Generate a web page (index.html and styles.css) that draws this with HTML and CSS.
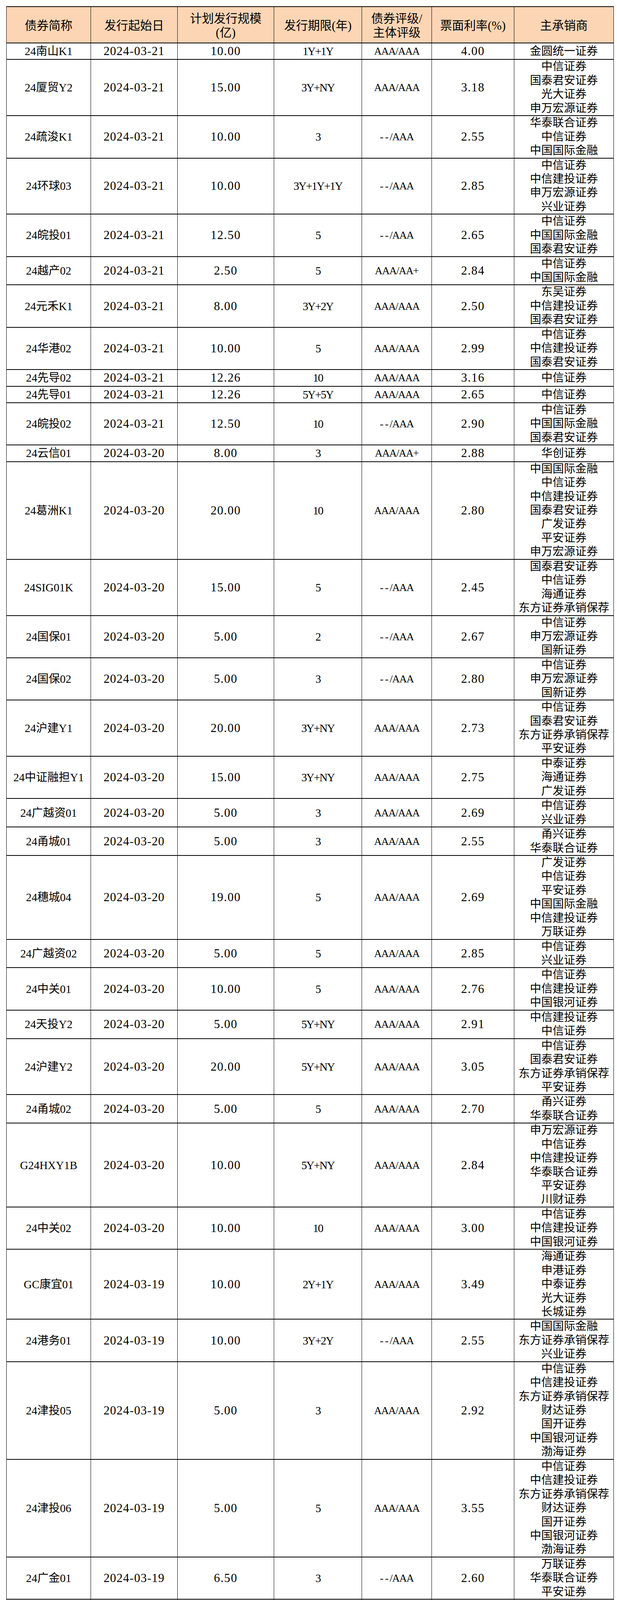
FILE: index.html
```html
<!DOCTYPE html>
<html lang="zh-CN">
<head>
<meta charset="utf-8">
<title>债券发行</title>
<link rel="stylesheet" href="styles.css">
</head>
<body>
<table class="bonds">
<colgroup>
<col class="w1"><col class="w2"><col class="w3"><col class="w4"><col class="w5"><col class="w6"><col class="w7">
</colgroup>
<thead>
<tr class="hd">
<th><div class="hc">债券简称</div></th>
<th><div class="hc">发行起始日</div></th>
<th><div class="hc"><div>计划发行规模</div><div>(亿)</div></div></th>
<th><div class="hc">发行期限(年)</div></th>
<th><div class="hc"><div>债券评级/</div><div>主体评级</div></div></th>
<th><div class="hc">票面利率(%)</div></th>
<th><div class="hc">主承销商</div></th>
</tr>
</thead>
<tbody>
<tr class="one"><td class="name">24南山K1</td><td class="date">2024-03-21</td><td class="amt">10.00</td><td class="term">1Y+1Y</td><td class="rating">AAA/AAA</td><td class="cpn">4.00</td><td class="uw"><div class="ln">金圆统一证券</div></td></tr>
<tr><td class="name">24厦贸Y2</td><td class="date">2024-03-21</td><td class="amt">15.00</td><td class="term">3Y+NY</td><td class="rating">AAA/AAA</td><td class="cpn">3.18</td><td class="uw"><div class="ln">中信证券</div><div class="ln">国泰君安证券</div><div class="ln">光大证券</div><div class="ln">申万宏源证券</div></td></tr>
<tr><td class="name">24疏浚K1</td><td class="date">2024-03-21</td><td class="amt">10.00</td><td class="term">3</td><td class="rating"><span class="dash">--</span>/AAA</td><td class="cpn">2.55</td><td class="uw"><div class="ln">华泰联合证券</div><div class="ln">中信证券</div><div class="ln">中国国际金融</div></td></tr>
<tr><td class="name">24环球03</td><td class="date">2024-03-21</td><td class="amt">10.00</td><td class="term">3Y+1Y+1Y</td><td class="rating"><span class="dash">--</span>/AAA</td><td class="cpn">2.85</td><td class="uw"><div class="ln">中信证券</div><div class="ln">中信建投证券</div><div class="ln">申万宏源证券</div><div class="ln">兴业证券</div></td></tr>
<tr><td class="name">24皖投01</td><td class="date">2024-03-21</td><td class="amt">12.50</td><td class="term">5</td><td class="rating"><span class="dash">--</span>/AAA</td><td class="cpn">2.65</td><td class="uw"><div class="ln">中信证券</div><div class="ln">中国国际金融</div><div class="ln">国泰君安证券</div></td></tr>
<tr><td class="name">24越产02</td><td class="date">2024-03-21</td><td class="amt">2.50</td><td class="term">5</td><td class="rating">AAA/AA+</td><td class="cpn">2.84</td><td class="uw"><div class="ln">中信证券</div><div class="ln">中国国际金融</div></td></tr>
<tr><td class="name">24元禾K1</td><td class="date">2024-03-21</td><td class="amt">8.00</td><td class="term">3Y+2Y</td><td class="rating">AAA/AAA</td><td class="cpn">2.50</td><td class="uw"><div class="ln">东吴证券</div><div class="ln">中信建投证券</div><div class="ln">国泰君安证券</div></td></tr>
<tr><td class="name">24华港02</td><td class="date">2024-03-21</td><td class="amt">10.00</td><td class="term">5</td><td class="rating">AAA/AAA</td><td class="cpn">2.99</td><td class="uw"><div class="ln">中信证券</div><div class="ln">中信建投证券</div><div class="ln">国泰君安证券</div></td></tr>
<tr class="one"><td class="name">24先导02</td><td class="date">2024-03-21</td><td class="amt">12.26</td><td class="term">10</td><td class="rating">AAA/AAA</td><td class="cpn">3.16</td><td class="uw"><div class="ln">中信证券</div></td></tr>
<tr class="one"><td class="name">24先导01</td><td class="date">2024-03-21</td><td class="amt">12.26</td><td class="term">5Y+5Y</td><td class="rating">AAA/AAA</td><td class="cpn">2.65</td><td class="uw"><div class="ln">中信证券</div></td></tr>
<tr><td class="name">24皖投02</td><td class="date">2024-03-21</td><td class="amt">12.50</td><td class="term">10</td><td class="rating"><span class="dash">--</span>/AAA</td><td class="cpn">2.90</td><td class="uw"><div class="ln">中信证券</div><div class="ln">中国国际金融</div><div class="ln">国泰君安证券</div></td></tr>
<tr class="one"><td class="name">24云信01</td><td class="date">2024-03-20</td><td class="amt">8.00</td><td class="term">3</td><td class="rating">AAA/AA+</td><td class="cpn">2.88</td><td class="uw"><div class="ln">华创证券</div></td></tr>
<tr><td class="name">24葛洲K1</td><td class="date">2024-03-20</td><td class="amt">20.00</td><td class="term">10</td><td class="rating">AAA/AAA</td><td class="cpn">2.80</td><td class="uw"><div class="ln">中国国际金融</div><div class="ln">中信证券</div><div class="ln">中信建投证券</div><div class="ln">国泰君安证券</div><div class="ln">广发证券</div><div class="ln">平安证券</div><div class="ln">申万宏源证券</div></td></tr>
<tr><td class="name">24SIG01K</td><td class="date">2024-03-20</td><td class="amt">15.00</td><td class="term">5</td><td class="rating"><span class="dash">--</span>/AAA</td><td class="cpn">2.45</td><td class="uw"><div class="ln">国泰君安证券</div><div class="ln">中信证券</div><div class="ln">海通证券</div><div class="ln">东方证券承销保荐</div></td></tr>
<tr><td class="name">24国保01</td><td class="date">2024-03-20</td><td class="amt">5.00</td><td class="term">2</td><td class="rating"><span class="dash">--</span>/AAA</td><td class="cpn">2.67</td><td class="uw"><div class="ln">中信证券</div><div class="ln">申万宏源证券</div><div class="ln">国新证券</div></td></tr>
<tr><td class="name">24国保02</td><td class="date">2024-03-20</td><td class="amt">5.00</td><td class="term">3</td><td class="rating"><span class="dash">--</span>/AAA</td><td class="cpn">2.80</td><td class="uw"><div class="ln">中信证券</div><div class="ln">申万宏源证券</div><div class="ln">国新证券</div></td></tr>
<tr><td class="name">24沪建Y1</td><td class="date">2024-03-20</td><td class="amt">20.00</td><td class="term">3Y+NY</td><td class="rating">AAA/AAA</td><td class="cpn">2.73</td><td class="uw"><div class="ln">中信证券</div><div class="ln">国泰君安证券</div><div class="ln">东方证券承销保荐</div><div class="ln">平安证券</div></td></tr>
<tr><td class="name">24中证融担Y1</td><td class="date">2024-03-20</td><td class="amt">15.00</td><td class="term">3Y+NY</td><td class="rating">AAA/AAA</td><td class="cpn">2.75</td><td class="uw"><div class="ln">中泰证券</div><div class="ln">海通证券</div><div class="ln">广发证券</div></td></tr>
<tr><td class="name">24广越资01</td><td class="date">2024-03-20</td><td class="amt">5.00</td><td class="term">3</td><td class="rating">AAA/AAA</td><td class="cpn">2.69</td><td class="uw"><div class="ln">中信证券</div><div class="ln">兴业证券</div></td></tr>
<tr><td class="name">24甬城01</td><td class="date">2024-03-20</td><td class="amt">5.00</td><td class="term">3</td><td class="rating">AAA/AAA</td><td class="cpn">2.55</td><td class="uw"><div class="ln">甬兴证券</div><div class="ln">华泰联合证券</div></td></tr>
<tr><td class="name">24穗城04</td><td class="date">2024-03-20</td><td class="amt">19.00</td><td class="term">5</td><td class="rating">AAA/AAA</td><td class="cpn">2.69</td><td class="uw"><div class="ln">广发证券</div><div class="ln">中信证券</div><div class="ln">平安证券</div><div class="ln">中国国际金融</div><div class="ln">中信建投证券</div><div class="ln">万联证券</div></td></tr>
<tr><td class="name">24广越资02</td><td class="date">2024-03-20</td><td class="amt">5.00</td><td class="term">5</td><td class="rating">AAA/AAA</td><td class="cpn">2.85</td><td class="uw"><div class="ln">中信证券</div><div class="ln">兴业证券</div></td></tr>
<tr><td class="name">24中关01</td><td class="date">2024-03-20</td><td class="amt">10.00</td><td class="term">5</td><td class="rating">AAA/AAA</td><td class="cpn">2.76</td><td class="uw"><div class="ln">中信证券</div><div class="ln">中信建投证券</div><div class="ln">中国银河证券</div></td></tr>
<tr><td class="name">24天投Y2</td><td class="date">2024-03-20</td><td class="amt">5.00</td><td class="term">5Y+NY</td><td class="rating">AAA/AAA</td><td class="cpn">2.91</td><td class="uw"><div class="ln">中信建投证券</div><div class="ln">中信证券</div></td></tr>
<tr><td class="name">24沪建Y2</td><td class="date">2024-03-20</td><td class="amt">20.00</td><td class="term">5Y+NY</td><td class="rating">AAA/AAA</td><td class="cpn">3.05</td><td class="uw"><div class="ln">中信证券</div><div class="ln">国泰君安证券</div><div class="ln">东方证券承销保荐</div><div class="ln">平安证券</div></td></tr>
<tr><td class="name">24甬城02</td><td class="date">2024-03-20</td><td class="amt">5.00</td><td class="term">5</td><td class="rating">AAA/AAA</td><td class="cpn">2.70</td><td class="uw"><div class="ln">甬兴证券</div><div class="ln">华泰联合证券</div></td></tr>
<tr><td class="name">G24HXY1B</td><td class="date">2024-03-20</td><td class="amt">10.00</td><td class="term">5Y+NY</td><td class="rating">AAA/AAA</td><td class="cpn">2.84</td><td class="uw"><div class="ln">申万宏源证券</div><div class="ln">中信证券</div><div class="ln">中信建投证券</div><div class="ln">华泰联合证券</div><div class="ln">平安证券</div><div class="ln">川财证券</div></td></tr>
<tr><td class="name">24中关02</td><td class="date">2024-03-20</td><td class="amt">10.00</td><td class="term">10</td><td class="rating">AAA/AAA</td><td class="cpn">3.00</td><td class="uw"><div class="ln">中信证券</div><div class="ln">中信建投证券</div><div class="ln">中国银河证券</div></td></tr>
<tr><td class="name">GC康宜01</td><td class="date">2024-03-19</td><td class="amt">10.00</td><td class="term">2Y+1Y</td><td class="rating">AAA/AAA</td><td class="cpn">3.49</td><td class="uw"><div class="ln">海通证券</div><div class="ln">申港证券</div><div class="ln">中泰证券</div><div class="ln">光大证券</div><div class="ln">长城证券</div></td></tr>
<tr><td class="name">24港务01</td><td class="date">2024-03-19</td><td class="amt">10.00</td><td class="term">3Y+2Y</td><td class="rating"><span class="dash">--</span>/AAA</td><td class="cpn">2.55</td><td class="uw"><div class="ln">中国国际金融</div><div class="ln">东方证券承销保荐</div><div class="ln">兴业证券</div></td></tr>
<tr><td class="name">24津投05</td><td class="date">2024-03-19</td><td class="amt">5.00</td><td class="term">3</td><td class="rating">AAA/AAA</td><td class="cpn">2.92</td><td class="uw"><div class="ln">中信证券</div><div class="ln">中信建投证券</div><div class="ln">东方证券承销保荐</div><div class="ln">财达证券</div><div class="ln">国开证券</div><div class="ln">中国银河证券</div><div class="ln">渤海证券</div></td></tr>
<tr><td class="name">24津投06</td><td class="date">2024-03-19</td><td class="amt">5.00</td><td class="term">5</td><td class="rating">AAA/AAA</td><td class="cpn">3.55</td><td class="uw"><div class="ln">中信证券</div><div class="ln">中信建投证券</div><div class="ln">东方证券承销保荐</div><div class="ln">财达证券</div><div class="ln">国开证券</div><div class="ln">中国银河证券</div><div class="ln">渤海证券</div></td></tr>
<tr><td class="name">24广金01</td><td class="date">2024-03-19</td><td class="amt">6.50</td><td class="term">3</td><td class="rating"><span class="dash">--</span>/AAA</td><td class="cpn">2.60</td><td class="uw"><div class="ln">万联证券</div><div class="ln">华泰联合证券</div><div class="ln">平安证券</div></td></tr>
<tr><td class="name">24龙川G1</td><td class="date">2024-03-19</td><td class="amt">7.00</td><td class="term">3Y+2Y</td><td class="rating"><span class="dash">--</span>/AA+</td><td class="cpn">2.83</td><td class="uw"><div class="ln">东吴证券</div><div class="ln">中国国际金融</div></td></tr>
<tr><td class="name">24广金02</td><td class="date">2024-03-19</td><td class="amt">6.50</td><td class="term">5</td><td class="rating"><span class="dash">--</span>/AAA</td><td class="cpn">2.70</td><td class="uw"><div class="ln">万联证券</div><div class="ln">华泰联合证券</div><div class="ln">平安证券</div></td></tr>
<tr><td class="name">24明债03</td><td class="date">2024-03-19</td><td class="amt">2.00</td><td class="term">3Y+2Y</td><td class="rating"><span class="dash">--</span>/AA+</td><td class="cpn">3.60</td><td class="uw"><div class="ln">国泰君安证券</div><div class="ln">东方证券承销保荐</div></td></tr>
<tr><td class="name">24保利02</td><td class="date">2024-03-19</td><td class="amt">10.00</td><td class="term">3Y+2Y</td><td class="rating">AAA/AAA</td><td class="cpn">2.99</td><td class="uw"><div class="ln">中信证券</div><div class="ln">中国国际金融</div><div class="ln">广发证券</div><div class="ln">华泰联合证券</div><div class="ln">中信建投证券</div></td></tr>
<tr><td class="name">24保利03</td><td class="date">2024-03-19</td><td class="amt">10.00</td><td class="term">5Y+2Y</td><td class="rating">AAA/AAA</td><td class="cpn">3.20</td><td class="uw"><div class="ln">中信证券</div><div class="ln">中国国际金融</div><div class="ln">广发证券</div><div class="ln">华泰联合证券</div><div class="ln">中信建投证券</div></td></tr>
<tr><td class="name">24深铁07</td><td class="date">2024-03-19</td><td class="amt">16.00</td><td class="term">15</td><td class="rating">AAA/AAA</td><td class="cpn">2.99</td><td class="uw"><div class="ln">中信建投证券</div><div class="ln">国泰君安证券</div><div class="ln">招商证券</div><div class="ln">申万宏源证券</div></td></tr>
<tr class="one"><td class="name">24交水01</td><td class="date">2024-03-18</td><td class="amt">11.00</td><td class="term">3Y+2Y</td><td class="rating"><span class="dash">--</span>/AA+</td><td class="cpn">2.75</td><td class="uw"><div class="ln">财信证券</div></td></tr>
<tr><td class="name">24唐租Y1</td><td class="date">2024-03-18</td><td class="amt">5.00</td><td class="term">2Y+NY</td><td class="rating">AAA/AAA</td><td class="cpn">2.80</td><td class="uw"><div class="ln">中信证券</div><div class="ln">中信建投证券</div><div class="ln">中泰证券</div><div class="ln">平安证券</div><div class="ln">广发证券</div><div class="ln">东方证券承销保荐</div></td></tr>
<tr><td class="name">24中化Y1</td><td class="date">2024-03-18</td><td class="amt">60.00</td><td class="term">3Y+NY</td><td class="rating">AAA/AAA</td><td class="cpn">2.65</td><td class="uw"><div class="ln">中信证券</div><div class="ln">中信建投证券</div><div class="ln">招商证券</div><div class="ln">中国国际金融</div><div class="ln">广发证券</div><div class="ln">中银国际证券</div><div class="ln">华泰联合证券</div></td></tr>
<tr><td class="name">24首农Y1</td><td class="date">2024-03-18</td><td class="amt">20.00</td><td class="term">3Y+NY</td><td class="rating">AAA/AAA</td><td class="cpn">2.70</td><td class="uw"><div class="ln">中信建投证券</div><div class="ln">中泰证券</div></td></tr>
<tr><td class="name">24豫通Y4</td><td class="date">2024-03-18</td><td class="amt">12.50</td><td class="term">5Y+NY</td><td class="rating">AAA/AAA</td><td class="cpn">2.88</td><td class="uw"><div class="ln">国泰君安证券</div><div class="ln">中信证券</div><div class="ln">申万宏源证券</div><div class="ln">广发证券</div></td></tr>
<tr class="one"><td class="name">24城建01</td><td class="date">2024-03-18</td><td class="amt">10.00</td><td class="term">5</td><td class="rating">AAA/AAA</td><td class="cpn">2.78</td><td class="uw"><div class="ln">中信建投证券</div></td></tr>
</tbody>
</table>
</body>
</html>
```

FILE: styles.css
```css
html, body {
  margin: 0;
  padding: 0;
  background: #ffffff;
}

body {
  font-family: "Liberation Serif", "Noto Sans CJK SC", serif;
  font-size: 29px;
  color: #000000;
}

.bonds {
  margin: 16px 0 0 16px;
  width: 1556px;
  table-layout: fixed;
  border-collapse: separate;
  border-spacing: 0;
  border-top: 2px solid #000;
  border-left: 1px solid #000;
}

.w1 { width: 216px; }
.w2 { width: 222px; }
.w3 { width: 247px; }
.w4 { width: 225px; }
.w5 { width: 179px; }
.w6 { width: 211px; }
.w7 { width: 255px; }

.bonds th,
.bonds td {
  padding: 0;
  text-align: center;
  vertical-align: middle;
  border-right: 1px solid #000;
  border-bottom: 2px solid #000;
  white-space: nowrap;
  overflow: hidden;
}

.hd th {
  background: #fcd5b4;
  font-weight: normal;
  font-size: 30.5px;
}

.hc {
  height: 87px;
  padding-top: 4px;
  display: flex;
  flex-direction: column;
  justify-content: center;
  align-items: center;
  line-height: 36px;
}

.bonds td {
  line-height: 28px;
}

.ln {
  height: 35.45px;
  line-height: 35.45px;
  overflow: visible;
}

.one .ln {
  height: 40.45px;
  line-height: 40.45px;
}

.bonds .date { font-size: 31px; letter-spacing: 1.2px; }
.bonds .amt { font-size: 31px; letter-spacing: 1.6px; }
.bonds .cpn { font-size: 31px; letter-spacing: 1.6px; }
.bonds .term { letter-spacing: -1.8px; }
.bonds .rating { font-size: 27px; letter-spacing: -1.2px; }
.rating .dash { letter-spacing: 4px; margin-right: -1px; }
.uw { letter-spacing: 0; }
```
